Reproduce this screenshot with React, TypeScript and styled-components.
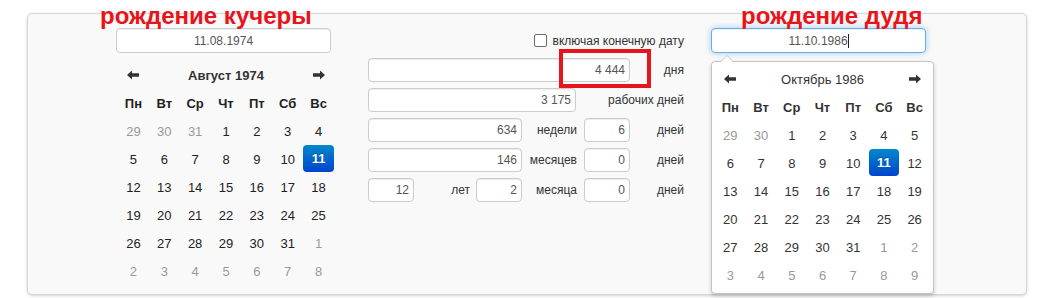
import React from 'react';
import styled, { createGlobalStyle, css } from 'styled-components';

const Global = createGlobalStyle`
  html, body { margin: 0; padding: 0; background: #fff; }
  body { font-family: "Liberation Sans", Arial, sans-serif; color: #333; }
  * { box-sizing: border-box; }
`;

const Page = styled.div`
  position: relative;
  width: 1051px;
  height: 298px;
  padding: 13px 0 0 27px;
  overflow: hidden;
`;

const Panel = styled.div`
  width: 1000px;
  height: 282px;
  background: #f9f9f9;
  border: 1px solid #d6d6d6;
  border-radius: 5px;
  box-shadow: 0 1px 3px rgba(0, 0, 0, 0.18);
  display: flex;
  align-items: flex-start;
  padding: 14px 0 0 88px;
`;

const LeftCol = styled.div`
  width: 218px;
  display: flex;
  flex-direction: column;
`;

const MiddleCol = styled.div`
  width: 316px;
  margin-left: 34px;
  display: flex;
  flex-direction: column;
`;

const RightCol = styled.div`
  width: 223px;
  margin-left: 27px;
  display: flex;
  flex-direction: column;
`;

const DateField = styled.div<{ $focused?: boolean }>`
  width: 215px;
  height: 25px;
  background: #fff;
  border: 1px solid ${(p) => (p.$focused ? '#66afe9' : '#ccc')};
  border-radius: 4px;
  box-shadow: ${(p) =>
    p.$focused
      ? 'inset 0 1px 1px rgba(0,0,0,.075), 0 0 6px rgba(102,175,233,.6)'
      : 'inset 0 1px 1px rgba(0,0,0,.075)'};
  display: flex;
  align-items: center;
  justify-content: center;
  font-size: 12px;
  color: #555;
`;

const Caret = styled.span`
  display: inline-block;
  width: 1px;
  height: 14px;
  background: #222;
  margin-left: 0px;
`;

const Calendar = styled.div<{ $popup?: boolean }>`
  display: grid;
  grid-template-columns: repeat(7, 1fr);
  grid-auto-rows: 28px;
  font-size: 13px;
  ${(p) =>
    p.$popup
      ? css`
          position: relative;
          width: 223px;
          margin-top: 8px;
          padding: 3px 3px 4px 3px;
          background: #fff;
          border: 1px solid #c4c4c4;
          border-radius: 4px;
          box-shadow: 0 2px 4px rgba(0, 0, 0, 0.18);
          color: #333;
        `
      : css`
          width: 216px;
          margin-top: 8px;
          margin-left: 2px;
          color: #222;
        `}
`;

const PopupCaret = styled.div`
  position: absolute;
  left: 8px;
  top: -7px;
  width: 0;
  height: 0;
  border-left: 7px solid transparent;
  border-right: 7px solid transparent;
  border-bottom: 7px solid #c4c4c4;
  &::after {
    content: '';
    position: absolute;
    left: -6px;
    top: 1px;
    border-left: 6px solid transparent;
    border-right: 6px solid transparent;
    border-bottom: 6px solid #fff;
  }
`;

const Cell = styled.div<{ $muted?: boolean; $active?: boolean; $head?: boolean }>`
  display: flex;
  align-items: center;
  justify-content: center;
  border-radius: 4px;
  font-weight: ${(p) => (p.$head || p.$active ? 'bold' : 'normal')};
  color: ${(p) => (p.$muted ? '#999' : 'inherit')};
  ${(p) =>
    p.$active &&
    css`
      color: #fff;
      background: linear-gradient(to bottom, #0088cc, #0044cc);
      text-shadow: 0 -1px 0 rgba(0, 0, 0, 0.25);
      margin: 0 0 1px 0;
    `}
`;

const Title = styled.div<{ $bold?: boolean }>`
  grid-column: 2 / 7;
  display: flex;
  align-items: center;
  justify-content: center;
  font-weight: ${(p) => (p.$bold ? 'bold' : 'normal')};
  font-size: 13px;
  color: #333;
`;

const ArrowCell = styled.div`
  display: flex;
  align-items: center;
  justify-content: center;
  color: #333;
`;

const CheckRow = styled.div`
  height: 25px;
  margin-bottom: 5px;
  display: flex;
  align-items: center;
  justify-content: flex-end;
  font-size: 12px;
  color: #333;
`;

const Box = styled.span`
  width: 13px;
  height: 13px;
  border: 1px solid #6b6b6b;
  border-radius: 2px;
  background: #fff;
  margin-right: 6px;
`;

const Grid = styled.div`
  position: relative;
  display: grid;
  grid-template-columns: 46px 62px 46px 62px 46px 54px;
  grid-auto-rows: 24px;
  row-gap: 6px;
`;

const NumField = styled.div<{ $span: string; $trim?: number }>`
  grid-column: ${(p) => p.$span};
  margin-right: ${(p) => p.$trim || 0}px;
  background: #fff;
  border: 1px solid #ccc;
  border-radius: 4px;
  box-shadow: inset 0 1px 1px rgba(0, 0, 0, 0.075);
  display: flex;
  align-items: center;
  justify-content: flex-end;
  padding-right: 4px;
  font-size: 12px;
  color: #555;
`;

const Label = styled.div<{ $span: string; $pad?: number }>`
  grid-column: ${(p) => p.$span};
  display: flex;
  align-items: center;
  justify-content: flex-end;
  padding-right: ${(p) => p.$pad ?? 0}px;
  font-size: 12px;
  color: #333;
  white-space: nowrap;
`;

const Highlight = styled.div`
  position: absolute;
  left: 191px;
  top: -9px;
  width: 92px;
  height: 39px;
  border: 4px solid #e8141b;
`;

const Annotation = styled.div<{ $left: number }>`
  position: absolute;
  left: ${(p) => p.$left}px;
  top: 4px;
  font-size: 24px;
  line-height: 24px;
  font-weight: bold;
  color: #e8141b;
  white-space: nowrap;
`;

const Arrow = ({ dir }: { dir: 'left' | 'right' }) => (
  <svg width="12" height="10" viewBox="0 0 12 10">
    <path
      d="M0 5 L5 0.5 L5 3.3 L12 3.3 L12 6.7 L5 6.7 L5 9.5 Z"
      fill="#333"
      transform={dir === 'right' ? 'translate(12 0) scale(-1 1)' : undefined}
    />
  </svg>
);

const HEADS = ['Пн', 'Вт', 'Ср', 'Чт', 'Пт', 'Сб', 'Вс'];

function buildMonth(year: number, month: number) {
  const first = new Date(year, month, 1);
  const offset = (first.getDay() + 6) % 7;
  const start = new Date(year, month, 1 - offset);
  const cells: { d: number; muted: boolean }[] = [];
  for (let i = 0; i < 42; i++) {
    const dt = new Date(start.getFullYear(), start.getMonth(), start.getDate() + i);
    cells.push({ d: dt.getDate(), muted: dt.getMonth() !== month });
  }
  return cells;
}

const MonthView = ({
  year,
  month,
  title,
  selected,
  popup,
}: {
  year: number;
  month: number;
  title: string;
  selected: number;
  popup?: boolean;
}) => (
  <Calendar $popup={popup}>
    {popup && <PopupCaret />}
    <ArrowCell>
      <Arrow dir="left" />
    </ArrowCell>
    <Title $bold={!popup}>{title}</Title>
    <ArrowCell>
      <Arrow dir="right" />
    </ArrowCell>
    {HEADS.map((h) => (
      <Cell key={h} $head>
        {h}
      </Cell>
    ))}
    {buildMonth(year, month).map((c, i) => (
      <Cell key={i} $muted={c.muted} $active={!c.muted && c.d === selected}>
        {c.d}
      </Cell>
    ))}
  </Calendar>
);

export default function App() {
  return (
    <>
      <Global />
      <Page>
        <Panel>
          <LeftCol>
            <DateField>11.08.1974</DateField>
            <MonthView year={1974} month={7} title="Август 1974" selected={11} />
          </LeftCol>
          <MiddleCol>
            <CheckRow>
              <Box />
              включая конечную дату
            </CheckRow>
            <Grid>
              <NumField $span="1 / 6">4 444</NumField>
              <Label $span="6 / 7">дня</Label>

              <NumField $span="1 / 5" $trim={8}>3 175</NumField>
              <Label $span="5 / 7">рабочих дней</Label>

              <NumField $span="1 / 4">634</NumField>
              <Label $span="4 / 5" $pad={7}>недели</Label>
              <NumField $span="5 / 6">6</NumField>
              <Label $span="6 / 7">дней</Label>

              <NumField $span="1 / 4">146</NumField>
              <Label $span="4 / 5" $pad={7}>месяцев</Label>
              <NumField $span="5 / 6">0</NumField>
              <Label $span="6 / 7">дней</Label>

              <NumField $span="1 / 2">12</NumField>
              <Label $span="2 / 3" $pad={6}>лет</Label>
              <NumField $span="3 / 4">2</NumField>
              <Label $span="4 / 5" $pad={7}>месяца</Label>
              <NumField $span="5 / 6">0</NumField>
              <Label $span="6 / 7">дней</Label>

              <Highlight />
            </Grid>
          </MiddleCol>
          <RightCol>
            <DateField $focused>
              11.10.1986
              <Caret />
            </DateField>
            <MonthView year={1986} month={9} title="Октябрь 1986" selected={11} popup />
          </RightCol>
        </Panel>
        <Annotation $left={100}>рождение кучеры</Annotation>
        <Annotation $left={741}>рождение дудя</Annotation>
      </Page>
    </>
  );
}
